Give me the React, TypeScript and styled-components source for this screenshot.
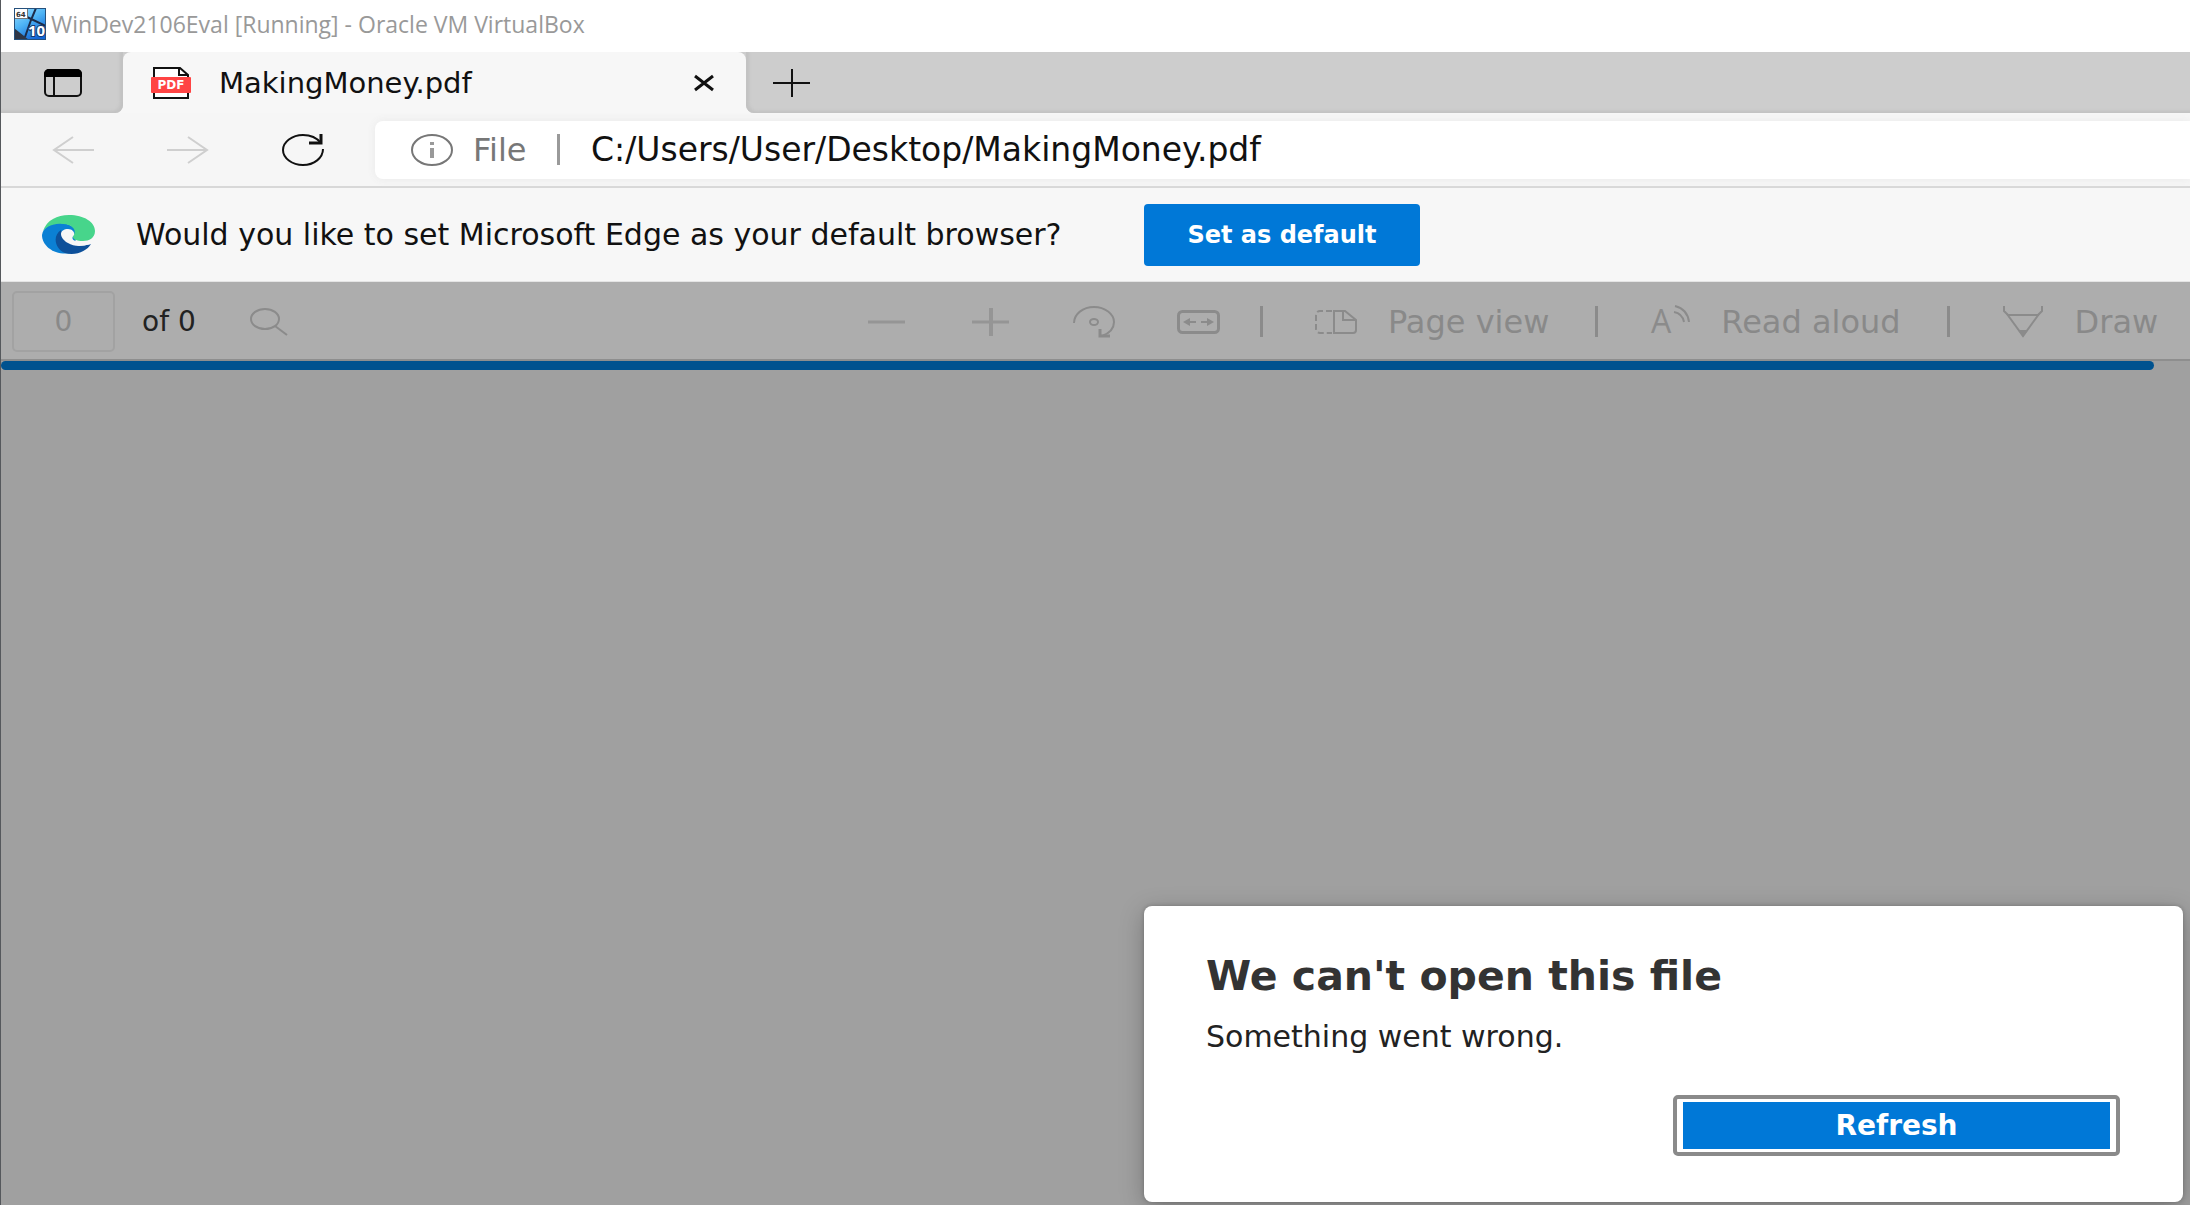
import React from "react";
import styled, { createGlobalStyle } from "styled-components";

const uiFont = '"DejaVu Sans", "Noto Sans", sans-serif';
const systemFont = '"Open Sans", "Noto Sans", sans-serif';

const GlobalStyle = createGlobalStyle`
  *, *::before, *::after { box-sizing: border-box; }
  body { margin: 0; background: #a0a0a0; }
  button, input { font: inherit; color: inherit; }
  svg { display: block; flex: none; }
`;

const Window = styled.div`
  display: flex;
  flex-direction: column;
  min-height: 100vh;
  border-left: 1px solid #55585c;
  font-family: ${uiFont};
  font-size: 28px;
  color: #111;
  overflow: hidden;
`;

const TitleBar = styled.header`
  display: flex;
  align-items: center;
  gap: 5px;
  height: 52px;
  padding: 0 13px 5px;
  background: #fff;
  color: #999;
  font-family: ${systemFont};
  font-size: 23px;
  white-space: nowrap;
`;

const TabStrip = styled.nav`
  display: flex;
  height: 61px;
  background: #f7f7f7;
`;

const PlainButton = styled.button`
  display: flex;
  align-items: center;
  justify-content: center;
  padding: 0;
  border: 0;
  background: none;
`;

const StripStart = styled.div`
  display: flex;
  width: 122px;
  padding-left: 43px;
  background: #cdcdcd;
  border-bottom-right-radius: 8px;
  box-shadow: inset -3px -2px 3px #c2c2c2;
`;

const StripEnd = styled.div`
  display: flex;
  flex: 1;
  padding-left: 27px;
  background: #cdcdcd;
  border-bottom-left-radius: 8px;
  box-shadow: inset 3px -2px 3px #c2c2c2;
`;

const TabSlot = styled.div`
  width: 623px;
  background: linear-gradient(#cdcdcd 50%, #f7f7f7 50%);
`;

const Tab = styled.div`
  display: flex;
  align-items: center;
  height: 100%;
  padding: 0 31px 0 28px;
  border-radius: 8px 8px 0 0;
  background: #f7f7f7;
  font-size: 29px;
`;

const TabTitle = styled.span`
  flex: 1;
  padding-left: 28px;
`;

const AddressRow = styled.div`
  display: flex;
  align-items: center;
  height: 75px;
  padding-left: 51px;
  background: #f6f6f6;
  border-bottom: 2px solid #d8d8d8;
`;

const NavButtons = styled.div`
  display: flex;
  gap: 73px;
  width: 323px;
`;

const AddressField = styled.label`
  display: flex;
  align-items: center;
  flex: 1;
  height: 58px;
  padding-left: 36px;
  border-radius: 8px 0 0 8px;
  background: #fff;
  box-shadow: 0 0 8px #e9e9e9;
`;

const Scheme = styled.span`
  width: 84px;
  margin-left: 20px;
  color: #777;
  font-size: 32px;
`;

const Separator = styled.span<{ $color: string }>`
  flex: none;
  width: 3px;
  height: 31px;
  background: ${(p) => p.$color};
`;

const AddressInput = styled.input`
  flex: 1;
  min-width: 0;
  padding: 0 0 0 31px;
  border: 0;
  outline: 0;
  background: none;
  font-size: 33px;
`;

const Prompt = styled.section`
  display: flex;
  align-items: center;
  height: 94px;
  padding-left: 41px;
  background: #f7f7f7;
  border-bottom: 1px solid #e4e4e4;
`;

const PromptText = styled.p`
  width: 1049px;
  margin: 0;
  padding-left: 41px;
  font-size: 30px;
  white-space: nowrap;
`;

const DefaultButton = styled.button`
  width: 276px;
  height: 62px;
  padding: 0;
  border: 0;
  border-radius: 4px;
  background: #0078d7;
  color: #fff;
  font-size: 24px;
  font-weight: 700;
`;

const PdfToolbar = styled.div`
  display: flex;
  align-items: center;
  height: 79px;
  padding: 2px 0 0 11px;
  background: #adadad;
  border-bottom: 2px solid #8e8e8e;
  color: #898989;
  white-space: nowrap;
`;

const PageTools = styled.div`
  display: flex;
  flex: none;
  align-items: center;
  width: 822px;
`;

const PageInput = styled.input`
  width: 103px;
  height: 61px;
  padding: 0;
  border: 2px solid #a2a2a2;
  border-radius: 5px;
  background: none;
  text-align: center;
`;

const PageCount = styled.span`
  width: 135px;
  padding-left: 27px;
  color: #222;
`;

const ToolButton = styled(PlainButton)`
  width: 104px;
  height: 60px;
`;

const ToolGroup = styled.div`
  display: flex;
  flex: none;
  padding-right: 10px;
`;

const LabelButton = styled(PlainButton)`
  flex: none;
  gap: 31px;
  height: 60px;
  padding: 0 46px 0 52px;
  font-size: 32px;

  &:last-child {
    padding-right: 0;
  }
`;

const Progress = styled.div`
  height: 9px;
  padding-right: 36px;
`;

const ProgressBar = styled.div`
  height: 100%;
  border-radius: 5px;
  background: #00528f;
`;

const Viewer = styled.main`
  display: flex;
  flex: 1;
  align-items: flex-end;
  justify-content: flex-end;
  padding: 0 7px 3px;
  background: #a0a0a0;
`;

const Dialog = styled.section`
  width: 1039px;
  max-width: 100%;
  padding: 42px 63px 46px 62px;
  border-radius: 8px;
  background: #fff;
  box-shadow: 0 6px 24px rgba(0, 0, 0, 0.25), 0 0 4px rgba(0, 0, 0, 0.2);
`;

const DialogTitle = styled.h1`
  margin: 0;
  color: #333;
  font-size: 41px;
  font-weight: 700;
  line-height: 56px;
`;

const DialogText = styled.p`
  margin: 13px 0 38px;
  color: #222;
  font-size: 30px;
  line-height: 40px;
`;

const RefreshButton = styled.button`
  display: block;
  width: 447px;
  height: 61px;
  margin-left: auto;
  padding: 3px 6px;
  border: 4px solid #8a8a8a;
  border-radius: 5px;
  background: #0078d7 content-box;
  color: #fff;
  font-size: 28px;
  font-weight: 700;
  line-height: 46px;
`;

type DrawingProps = {
  w: number;
  h: number;
  stroke?: string;
  width?: number;
  children: React.ReactNode;
};

const Drawing = ({ w, h, stroke = "none", width = 2, children }: DrawingProps) => (
  <svg width={w} height={h} viewBox={`0 0 ${w} ${h}`} fill="none" stroke={stroke} strokeWidth={width} aria-hidden="true">
    {children}
  </svg>
);

const GREY = "#8b8b8b";
const LIGHT_GREY = "#959595";

const MachineIcon = () => (
  <Drawing w={32} h={32}>
    <defs>
      <linearGradient id="sky" x1="0" y1="0" x2="0.6" y2="1">
        <stop offset="0" stopColor="#9fe0ff" />
        <stop offset="0.5" stopColor="#4eb4f5" />
        <stop offset="1" stopColor="#1266d6" />
      </linearGradient>
    </defs>
    <rect width="32" height="32" fill="url(#sky)" />
    <path d="M0 20 15 32H0Z" fill="#2f3646" />
    <path d="M22 0 17 12 11 29M13 9l19 9" stroke="#1c2c49" strokeWidth="2" />
    <rect x="0.5" y="0.5" width="13" height="10" fill="#fff" stroke="#777" strokeWidth="1" />
    <text x="2" y="9" fontSize="7" fontWeight="700" fontFamily={uiFont} fill="#333">64</text>
    <text x="14" y="28" fontSize="15" fontWeight="700" fontFamily={systemFont} fill="#fff" stroke="#173b70" strokeWidth="2" paintOrder="stroke">10</text>
    <rect x="0.5" y="0.5" width="31" height="31" stroke="#25507c" strokeWidth="1" />
  </Drawing>
);

const TabActionsIcon = () => (
  <Drawing w={38} h={28} stroke="#111" width={2}>
    <rect x="1" y="1" width="36" height="26" rx="4" />
    <path d="M0 8V5a5 5 0 0 1 5-5h28a5 5 0 0 1 5 5v3Z" fill="#000" stroke="none" />
    <path d="M10 8v19" />
  </Drawing>
);

const PdfIcon = () => (
  <Drawing w={40} h={32}>
    <path d="M3 1h26l8 7v23H3Z" fill="#fff" stroke="#111" strokeWidth="2" />
    <path d="M28 1v7h9" stroke="#111" strokeWidth="2" />
    <rect x="0" y="10" width="40" height="16" rx="1" fill="#ff4444" />
    <text x="20" y="22" textAnchor="middle" fontSize="12" fontWeight="700" fontFamily={uiFont} fill="#fff">PDF</text>
  </Drawing>
);

const EdgeIcon = () => (
  <Drawing w={53} h={39}>
    <path d="M0 20C1 12 9 8 18 8c10 0 17 5 17 12L30 38C12 41 0 31 0 20Z" fill="#0b80d4" />
    <path d="M19 15c-9 6-6 19 4 23 11 3 22-2 26-9-8 3-22 2-28-7Z" fill="#0d509a" />
    <path d="M1 16C5 5 15 0 27 0c15 0 26 7 26 16 0 7-6 10-12 10-6 0-11-2-10-5 3-4 2-7-2-10C21 7 7 8 1 16Z" fill="#47d58b" />
    <path d="M26 14c4 0 7 3 6 6-4 4 0 7 8 7 4 0 7 0 9 1-7 4-17 4-23 0-4-2-7-6-7-9 0-3 3-5 7-5Z" fill="#f7f7f7" />
  </Drawing>
);

const App = () => (
  <Window>
    <GlobalStyle />
    <TitleBar>
      <MachineIcon />
      <span>WinDev2106Eval [Running] - Oracle VM VirtualBox</span>
    </TitleBar>

    <TabStrip aria-label="Tabs">
      <StripStart>
        <PlainButton aria-label="Tab actions"><TabActionsIcon /></PlainButton>
      </StripStart>
      <TabSlot>
        <Tab>
          <PdfIcon />
          <TabTitle>MakingMoney.pdf</TabTitle>
          <PlainButton aria-label="Close tab">
            <Drawing w={22} h={18} stroke="#111" width={3}><path d="m2 2 18 14M20 2 2 16" /></Drawing>
          </PlainButton>
        </Tab>
      </TabSlot>
      <StripEnd>
        <PlainButton aria-label="New tab">
          <Drawing w={37} h={28} stroke="#111"><path d="M0 14h37M19 0v28" /></Drawing>
        </PlainButton>
      </StripEnd>
    </TabStrip>

    <AddressRow>
      <NavButtons>
        <PlainButton aria-label="Back">
          <Drawing w={42} h={28} stroke="#cfcfcf"><path d="M42 14H2M21 1 2 14l19 13" /></Drawing>
        </PlainButton>
        <PlainButton aria-label="Forward">
          <Drawing w={42} h={28} stroke="#cfcfcf"><path d="M0 14h40M21 1l19 13-19 13" /></Drawing>
        </PlainButton>
        <PlainButton aria-label="Reload">
          <Drawing w={43} h={32} stroke="#111">
            <path d="M41 15c0 9-9 16-20 16S1 24 1 16 10 1 21 1c8 0 14 3 18 8" />
            <path d="M39 0v9H27" strokeWidth="3" />
          </Drawing>
        </PlainButton>
      </NavButtons>
      <AddressField>
        <Drawing w={42} h={32} stroke="#777">
          <ellipse cx="21" cy="16" rx="20" ry="15" />
          <path d="M21 14v10M21 8v3" strokeWidth="4" stroke="#999" />
        </Drawing>
        <Scheme>File</Scheme>
        <Separator $color="#9a9a9a" />
        <AddressInput type="text" aria-label="Address" defaultValue="C:/Users/User/Desktop/MakingMoney.pdf" />
      </AddressField>
    </AddressRow>

    <Prompt>
      <EdgeIcon />
      <PromptText>Would you like to set Microsoft Edge as your default browser?</PromptText>
      <DefaultButton>Set as default</DefaultButton>
    </Prompt>

    <PdfToolbar>
      <PageTools>
        <PageInput type="text" aria-label="Page number" defaultValue="0" />
        <PageCount>of 0</PageCount>
        <PlainButton aria-label="Search">
          <Drawing w={38} h={28} stroke={GREY}>
            <ellipse cx="15" cy="11" rx="14" ry="10" />
            <path d="m25 18 12 9" />
          </Drawing>
        </PlainButton>
      </PageTools>
      <ToolGroup>
        <ToolButton aria-label="Zoom out">
          <Drawing w={37} h={28} stroke={LIGHT_GREY} width={3}><path d="M0 14h37" /></Drawing>
        </ToolButton>
        <ToolButton aria-label="Zoom in">
          <Drawing w={37} h={28} stroke={LIGHT_GREY} width={3}>
            <path d="M0 14h37" />
            <path d="M19 0v28" strokeWidth="4" />
          </Drawing>
        </ToolButton>
        <ToolButton aria-label="Rotate">
          <Drawing w={42} h={32} stroke={GREY}>
            <path d="M1 17C1 8 10 1 21 1s20 7 20 15c0 6-4 11-12 14" />
            <path d="M27 23v7h10" strokeWidth="3" />
            <ellipse cx="21" cy="16" rx="4" ry="3" />
          </Drawing>
        </ToolButton>
        <ToolButton aria-label="Fit to width">
          <Drawing w={43} h={24} stroke={GREY} width={3}>
            <rect x="1.5" y="1.5" width="40" height="21" rx="4" />
            <path d="M8 12h11M24 12h11" strokeWidth="2" />
            <path d="m6 12 7-4v8ZM37 12l-7-4v8Z" fill={GREY} stroke="none" />
          </Drawing>
        </ToolButton>
      </ToolGroup>
      <Separator $color={GREY} />
      <LabelButton>
        <Drawing w={42} h={24} stroke={GREY}>
          <path d="M17 1H5a4 4 0 0 0-4 4v14a4 4 0 0 0 4 4h12" strokeDasharray="6 3" />
          <path d="M19 1h11l11 9v10a3 3 0 0 1-3 3H19Z" />
          <path d="M28 1v9h13" />
        </Drawing>
        Page view
      </LabelButton>
      <Separator $color={GREY} />
      <LabelButton>
        <Drawing w={40} h={48} stroke={GREY}>
          <text x="1" y="35" fontSize="32" fontFamily={systemFont} fill={GREY} stroke="none">A</text>
          <path d="M24 14c6 1 9 5 10 10M25 8c8 2 13 8 14 16" />
        </Drawing>
        Read aloud
      </LabelButton>
      <Separator $color={GREY} />
      <LabelButton>
        <Drawing w={42} h={32} stroke={GREY}>
          <path d="M2 0v5l4 4h30l4-4V0" />
          <path d="m5 8 16 22L37 8" />
          <path d="M16 24h10l-5 7Z" fill={GREY} stroke="none" />
        </Drawing>
        Draw
      </LabelButton>
    </PdfToolbar>

    <Progress role="progressbar" aria-label="Loading document">
      <ProgressBar />
    </Progress>

    <Viewer>
      <Dialog role="alertdialog" aria-labelledby="error-title" aria-describedby="error-text">
        <DialogTitle id="error-title">We can't open this file</DialogTitle>
        <DialogText id="error-text">Something went wrong.</DialogText>
        <RefreshButton>Refresh</RefreshButton>
      </Dialog>
    </Viewer>
  </Window>
);

export default App;
